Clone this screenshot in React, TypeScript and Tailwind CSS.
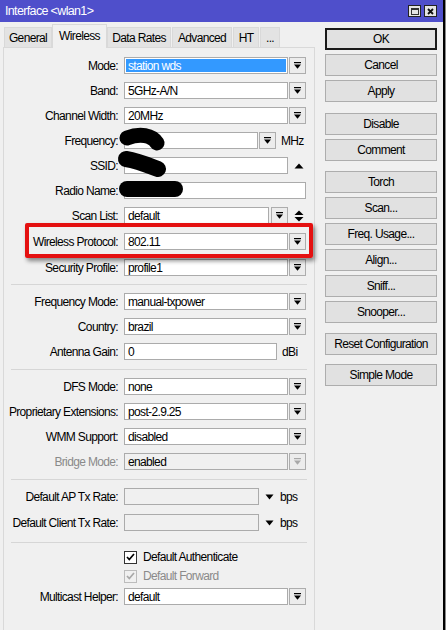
import React from 'react';

const font = "font-['Liberation_Sans',Arial,sans-serif] text-[12px] tracking-[-0.65px]";

function DropIcon({ disabled }: { disabled?: boolean }) {
  const c = disabled ? '#a8a8a8' : '#000';
  return (
    <svg width="9" height="8" viewBox="0 0 9 8">
      <rect x="1" y="0" width="7" height="1.2" fill={c} />
      <path d="M1 2.5h7L4.5 6.8z" fill={c} />
    </svg>
  );
}

function DropBtn({ disabled }: { disabled?: boolean }) {
  return (
    <div className="w-[17px] h-[17px] border border-[#adadad] bg-[#ececec] flex items-center justify-center shrink-0">
      <DropIcon disabled={disabled} />
    </div>
  );
}

function Box({
  w,
  value,
  selected,
  gray,
}: {
  w: number;
  value?: string;
  selected?: boolean;
  gray?: boolean;
}) {
  return (
    <div
      className={`h-[17px] border border-[#ababab] shrink-0 flex items-center ${gray ? 'bg-[#f0f0f0]' : 'bg-white'}`}
      style={{ width: w }}
    >
      {selected ? (
        <div className="mx-px h-[13px] flex-1 bg-[#3399ff] text-white flex items-center pl-[2px] leading-none">{value}</div>
      ) : (
        <span className="pl-[3px] leading-none">{value}</span>
      )}
    </div>
  );
}

function Row({ label, dim, className, children }: { label: string; dim?: boolean; className?: string; children: React.ReactNode }) {
  return (
    <div className={`flex items-center h-[17px] ${className ?? ''}`}>
      <div className={`w-[114px] text-right whitespace-nowrap ${dim ? 'text-[#8a8a8a]' : ''}`}>{label}</div>
      <div className="ml-[6px] flex items-center">{children}</div>
    </div>
  );
}

function Sep({ className }: { className?: string }) {
  return <div className={`ml-[7px] w-[296px] h-px bg-[#d6d6d6] ${className ?? ''}`} />;
}

function Select({ label, value, selected, dim }: { label: string; value: string; selected?: boolean; dim?: boolean }) {
  return (
    <Row label={label} dim={dim}>
      <Box w={164} value={value} selected={selected} gray={dim} />
      <div className="ml-px">
        <DropBtn disabled={dim} />
      </div>
    </Row>
  );
}

function Check({ label, disabled }: { label: string; disabled?: boolean }) {
  return (
    <div className="flex items-center h-[14px] pl-[120px]">
      <div
        className={`w-[13px] h-[13px] border flex items-center justify-center ${disabled ? 'border-[#bcbcbc] bg-[#f0f0f0]' : 'border-[#333] bg-white'}`}
      >
        <svg width="9" height="8" viewBox="0 0 9 8">
          <path d="M1 4l2.3 2.5L8 1" stroke={disabled ? '#a8a8a8' : '#000'} strokeWidth="1.7" fill="none" />
        </svg>
      </div>
      <span className={`ml-[6px] ${disabled ? 'text-[#8a8a8a]' : ''}`}>{label}</span>
    </div>
  );
}

function Btn({ label, main, className }: { label: string; main?: boolean; className?: string }) {
  return (
    <div
      className={`h-[22px] w-[112px] flex items-center justify-center bg-[#e1e1e1] ${
        main ? 'border-2 border-[#1a1a1a]' : 'border border-[#adadad]'
      } ${className ?? ''}`}
    >
      {label}
    </div>
  );
}

const tabs = [
  { name: 'General', w: 48, ml: 1 },
  { name: 'Wireless', w: 55, ml: 0, active: true },
  { name: 'Data Rates', w: 64, ml: 0 },
  { name: 'Advanced', w: 60, ml: 1 },
  { name: 'HT', w: 26, ml: 1 },
  { name: '...', w: 20, ml: 1 },
];

export default function App() {
  return (
    <div className={`relative w-[446px] h-[630px] overflow-hidden flex bg-[#f0f0f0] text-black ${font}`}>
      <div className="w-[443px] flex flex-col">
        {/* title bar */}
        <div className="h-[22px] bg-[#4f4fcb] flex items-center pl-[5px] pr-[6px] text-white text-[12.5px]">
          <span className="flex-1">Interface &lt;wlan1&gt;</span>
          <div className="flex gap-[3px]">
            <div className="w-[13px] h-[12px] bg-[#e4e4e4] border border-[#222] flex items-center justify-center">
              <div className="w-[8px] h-[7px] border border-[#333] border-t-2" />
            </div>
            <div className="w-[13px] h-[12px] bg-[#e4e4e4] border border-[#222] flex items-center justify-center">
              <svg width="7" height="7" viewBox="0 0 7 7">
                <path d="M1 1l5 5M6 1l-5 5" stroke="#111" strokeWidth="1.8" />
              </svg>
            </div>
          </div>
        </div>

        <div className="flex flex-1">
          {/* left: tabs + panel */}
          <div className="w-[315px] pl-[3px] flex flex-col">
            <div className="h-[25px] flex items-end">
              {tabs.map((t) => (
                <div
                  key={t.name}
                  style={{ width: t.w, marginLeft: t.ml }}
                  className={
                    t.active
                      ? 'relative z-10 h-[24px] -mb-px bg-[#f0f0f0] border border-b-0 border-[#d9d9d9] flex items-center justify-center pb-[2px]'
                      : 'h-[20px] bg-[#e3e3e3] border border-b-0 border-[#d9d9d9] flex items-center justify-center'
                  }
                >
                  {t.name}
                </div>
              ))}
            </div>
            <div className="flex-1 border border-b-0 border-[#d9d9d9] pt-[9px] flex flex-col gap-2">
              <Select label="Mode:" value="station wds" selected />
              <Select label="Band:" value="5GHz-A/N" />
              <Select label="Channel Width:" value="20MHz" />
              <Row label="Frequency:">
                <Box w={134} />
                <div className="ml-[1px]">
                  <DropBtn />
                </div>
                <span className="ml-[5px]">MHz</span>
              </Row>
              <Row label="SSID:">
                <Box w={164} />
                <svg className="ml-[6px]" width="10" height="6" viewBox="0 0 10 6">
                  <path d="M0.5 5.5L5 0.5l4.5 5z" fill="#000" />
                </svg>
              </Row>
              <Row label="Radio Name:">
                <Box w={182} />
              </Row>
              <Row label="Scan List:">
                <Box w={145} value="default" />
                <div className="ml-[2px]">
                  <DropBtn />
                </div>
                <svg className="ml-[6px]" width="10" height="12" viewBox="0 0 10 12">
                  <path d="M0.5 5L5 0.5 9.5 5z" fill="#000" />
                  <path d="M0.5 7h9L5 11.5z" fill="#000" />
                </svg>
              </Row>
              <div className="mt-px">
                <Select label="Wireless Protocol:" value="802.11" />
              </div>
              <div className="mt-px">
                <Select label="Security Profile:" value="profile1" />
              </div>
              <Sep />
              <Select label="Frequency Mode:" value="manual-txpower" />
              <Select label="Country:" value="brazil" />
              <Row label="Antenna Gain:">
                <Box w={153} value="0" />
                <span className="ml-[5px]">dBi</span>
              </Row>
              <Sep className="mt-px" />
              <Select label="DFS Mode:" value="none" />
              <Select label="Proprietary Extensions:" value="post-2.9.25" />
              <Select label="WMM Support:" value="disabled" />
              <Select label="Bridge Mode:" value="enabled" dim />
              <Sep className="mt-px" />
              <Row label="Default AP Tx Rate:">
                <Box w={135} gray />
                <svg className="ml-[6px]" width="9" height="6" viewBox="0 0 9 6">
                  <path d="M0.5 0.5h8L4.5 5.5z" fill="#000" />
                </svg>
                <span className="ml-[6px]">bps</span>
              </Row>
              <Row label="Default Client Tx Rate:" className="mt-px">
                <Box w={135} gray />
                <svg className="ml-[6px]" width="9" height="6" viewBox="0 0 9 6">
                  <path d="M0.5 0.5h8L4.5 5.5z" fill="#000" />
                </svg>
                <span className="ml-[6px]">bps</span>
              </Row>
              <Sep className="mt-[3px]" />
              <div className="-mt-px">
                <Check label="Default Authenticate" />
              </div>
              <div className="-mt-[3px]">
                <Check label="Default Forward" disabled />
              </div>
              <div className="-mt-[3px]">
                <Select label="Multicast Helper:" value="default" />
              </div>
            </div>
          </div>

          {/* right: buttons */}
          <div className="ml-[10px] pt-[6px] flex flex-col gap-1">
            <Btn label="OK" main />
            <Btn label="Cancel" />
            <Btn label="Apply" />
            <Btn label="Disable" className="mt-[7px]" />
            <Btn label="Comment" />
            <Btn label="Torch" className="mt-[6px]" />
            <Btn label="Scan..." />
            <Btn label="Freq. Usage..." />
            <Btn label="Align..." />
            <Btn label="Sniff..." />
            <Btn label="Snooper..." />
            <Btn label="Reset Configuration" className="mt-[6px]" />
            <Btn label="Simple Mode" className="mt-[5px]" />
          </div>
        </div>
      </div>
      <div className="w-[2px] bg-black" />
      <div className="w-px bg-[#8a8a8a]" />

      {/* annotation: red box around Wireless Protocol */}
      <div className="absolute left-[25px] top-[223px] w-[288px] h-[35px] border-4 border-[#e41010] rounded-[2px] shadow-[2px_3px_4px_rgba(0,0,0,0.45)]" />

      {/* annotation: blacked-out values */}
      <svg className="absolute left-0 top-0 pointer-events-none" width="446" height="630" viewBox="0 0 446 630">
        <g stroke="#000" strokeLinecap="round" fill="none" style={{ filter: 'blur(0.7px)' }}>
          <path d="M127 138 C 140 133, 152 135, 157 143" strokeWidth="15" />
          <path d="M126 159 C 138 161, 150 166, 158 169" strokeWidth="16" />
          <path d="M127 189 L 175 189" strokeWidth="16" />
        </g>
      </svg>
    </div>
  );
}
